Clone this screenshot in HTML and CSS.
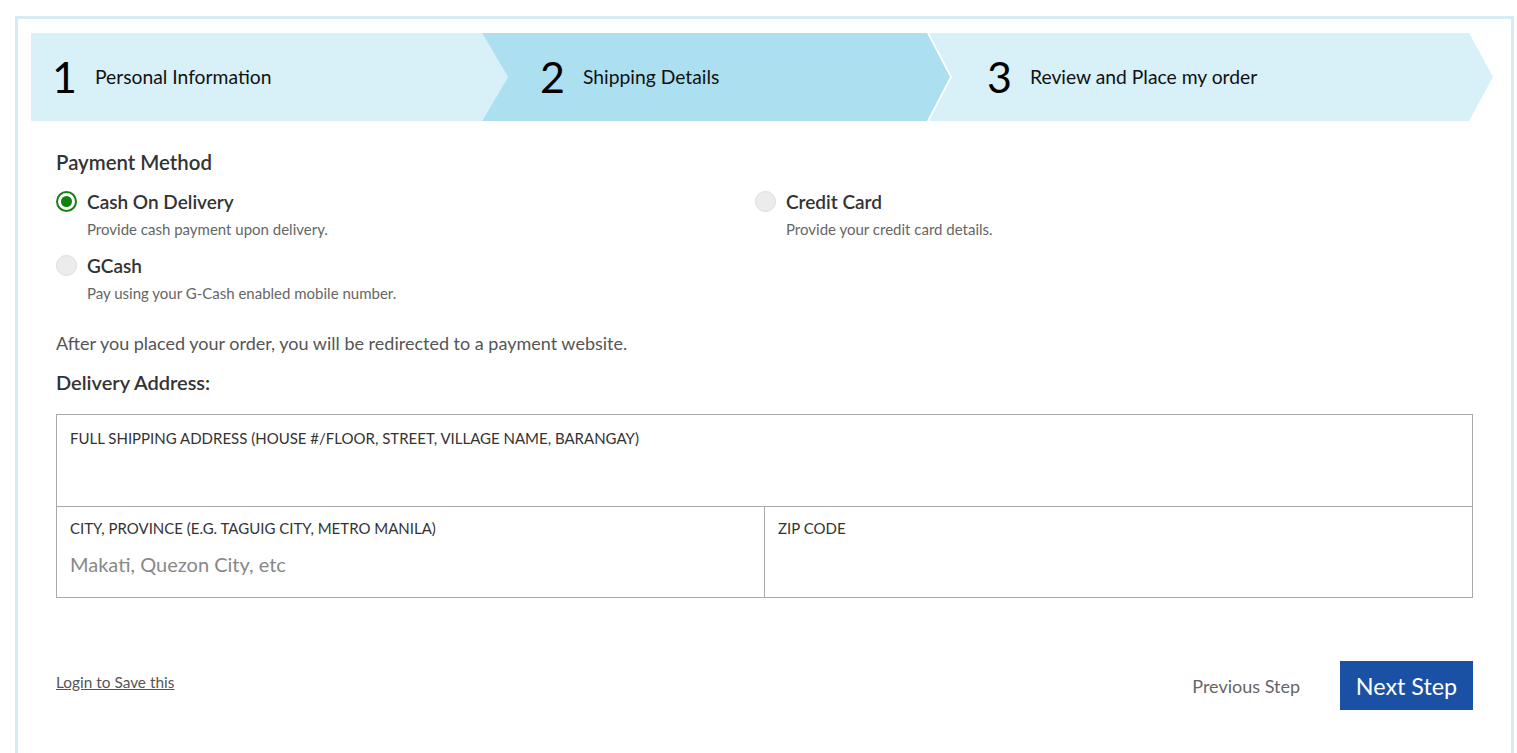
FILE: index.html
```html
<!DOCTYPE html>
<html>
<head>
<meta charset="utf-8">
<link rel="stylesheet" href="styles.css">
</head>
<body>
<div class="frame">
  <div class="steps">
    <div class="step step1"><span class="num">1</span><span class="label">Personal Information</span></div>
    <div class="step step2"><span class="num">2</span><span class="label">Shipping Details</span></div>
    <div class="step step3"><span class="num">3</span><span class="label">Review and Place my order</span></div>
  </div>
  <div class="content">
    <h2 class="heading">Payment Method</h2>
    <div class="methods">
      <div class="method">
        <div class="method-top"><span class="radio checked"></span><span class="method-name">Cash On Delivery</span></div>
        <div class="method-desc">Provide cash payment upon delivery.</div>
      </div>
      <div class="method">
        <div class="method-top"><span class="radio"></span><span class="method-name">Credit Card</span></div>
        <div class="method-desc">Provide your credit card details.</div>
      </div>
      <div class="method">
        <div class="method-top"><span class="radio"></span><span class="method-name">GCash</span></div>
        <div class="method-desc">Pay using your G-Cash enabled mobile number.</div>
      </div>
    </div>
    <p class="note">After you placed your order, you will be redirected to a payment website.</p>
    <h2 class="heading addr">Delivery Address:</h2>
    <div class="address">
      <div class="cell full">
        <div class="cell-label">FULL SHIPPING ADDRESS (HOUSE #/FLOOR, STREET, VILLAGE NAME, BARANGAY)</div>
      </div>
      <div class="cell">
        <div class="cell-label">CITY, PROVINCE (E.G. TAGUIG CITY, METRO MANILA)</div>
        <div class="placeholder">Makati, Quezon City, etc</div>
      </div>
      <div class="cell right">
        <div class="cell-label">ZIP CODE</div>
      </div>
    </div>
    <div class="footer">
      <a class="login" href="#">Login to Save this</a>
      <div class="nav">
        <span class="prev">Previous Step</span>
        <span class="next">Next Step</span>
      </div>
    </div>
  </div>
</div>
</body>
</html>
```

FILE: styles.css
```css
html, body {
  margin: 0;
  padding: 0;
  background: #fff;
  font-family: Lato, "Open Sans", sans-serif;
  color: #333;
}
body {
  padding: 16px 3px 0 15px;
  overflow: hidden;
  height: 753px;
  box-sizing: border-box;
}
.frame {
  border: 3px solid #d6ecf4;
  border-bottom: none;
  padding: 14px 20px 40px 13px;
  height: 760px;
  box-sizing: border-box;
}
.steps {
  display: flex;
  height: 88px;
}
.step {
  display: flex;
  align-items: center;
  box-sizing: border-box;
  height: 88px;
  background: #d8f0f8;
}
.step1 {
  flex: 0 0 477px;
  padding-left: 21px;
  clip-path: polygon(0 0, calc(100% - 26px) 0, 100% 50%, calc(100% - 26px) 100%, 0 100%);
}
.step2 {
  flex: 0 0 468px;
  margin-left: -26px;
  padding-left: 58px;
  background: #acdff0;
  clip-path: polygon(0 0, calc(100% - 23px) 0, 100% 50%, calc(100% - 23px) 100%, 0 100%, 26px 50%);
}
.step3 {
  flex: 0 0 564px;
  margin-left: -21px;
  padding-left: 58px;
  clip-path: polygon(0 0, calc(100% - 24px) 0, 100% 50%, calc(100% - 24px) 100%, 0 100%, 23px 50%);
}
.num {
  font-size: 43px;
  color: #000;
  width: 43px;
  line-height: 1;
  font-weight: 400;
  margin-top: -1px;
}
.label {
  font-size: 19.3px;
  color: #111;
  margin-top: -2px;
}
.content {
  padding: 0 18px 0 25px;
}
.heading {
  font-size: 20.4px;
  font-weight: 600;
  margin: 29px 0 0;
  line-height: 24px;
  color: #333;
}
.methods {
  display: grid;
  grid-template-columns: 699px 1fr;
  row-gap: 16px;
  margin-top: 16px;
}
.method-top {
  display: flex;
  align-items: center;
  height: 22px;
}
.radio {
  width: 19px;
  height: 19px;
  border-radius: 50%;
  border: 1px solid #dcdcdc;
  background: #ececec;
  margin-right: 10px;
  flex: none;
  box-sizing: content-box;
}
.radio.checked {
  background: #fff;
  border: 2px solid #128112;
  width: 17px;
  height: 17px;
  position: relative;
}
.radio.checked::after {
  content: "";
  position: absolute;
  left: 3px;
  top: 3px;
  width: 11px;
  height: 11px;
  border-radius: 50%;
  background: #128112;
}
.method-name {
  font-size: 19px;
  font-weight: 600;
  color: #333;
}
.method-desc {
  font-size: 15px;
  color: #666;
  margin: 8px 0 0 31px;
  line-height: 18px;
}
.note {
  font-size: 18px;
  color: #555;
  margin: 31px 0 0;
  line-height: 20px;
}
.heading.addr {
  font-size: 20px;
  margin-top: 17px;
}
.address {
  display: grid;
  grid-template-columns: 707px 1fr;
  grid-template-rows: 91px 91px;
  border: 1px solid #a9a9a9;
  margin-top: 20px;
}
.cell {
  padding: 12px 13px 0;
  border-top: 1px solid #a9a9a9;
}
.cell.full {
  grid-column: 1 / 3;
  border-top: none;
  padding-top: 14px;
}
.cell.right {
  border-left: 1px solid #a9a9a9;
}
.cell-label {
  font-size: 15px;
  color: #333;
  line-height: 18px;
}
.placeholder {
  font-size: 20px;
  color: #888;
  margin-top: 15px;
}
.footer {
  display: flex;
  justify-content: space-between;
  align-items: flex-start;
  margin-top: 63px;
}
.login {
  font-size: 15.4px;
  color: #555;
  text-decoration: underline;
  margin-top: 12px;
}
.nav {
  display: flex;
  align-items: center;
}
.prev {
  font-size: 18px;
  color: #666;
  margin-right: 40px;
  margin-top: 1px;
}
.next {
  background: #1a51a5;
  color: #fff;
  font-size: 23.3px;
  height: 49px;
  width: 133px;
  display: flex;
  align-items: center;
  justify-content: center;
}
```
